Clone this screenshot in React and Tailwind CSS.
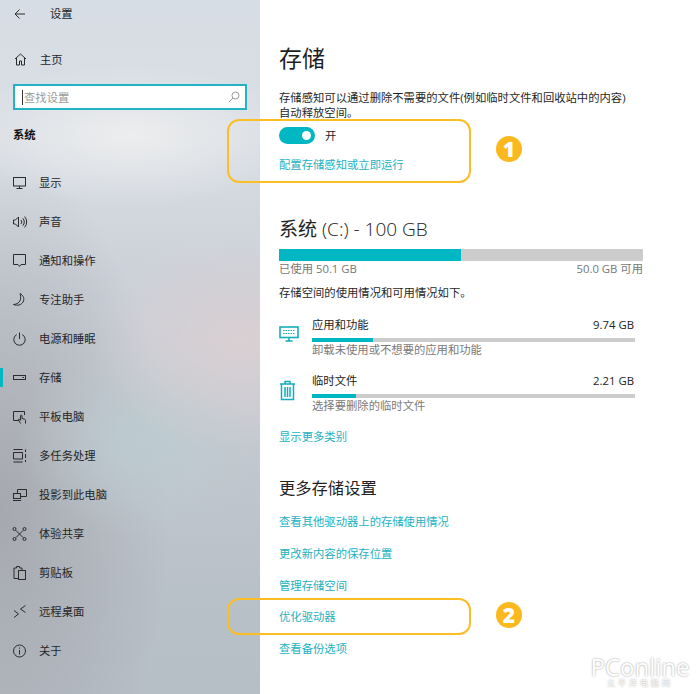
const cjk = "font-['Open_Sans','Noto_Sans_CJK_SC',sans-serif]";

function Glyph({ children }) {
  return (
    <svg width="16" height="16" viewBox="0 0 16 16" fill="none" stroke="#2b2b2b" strokeWidth="1" className="shrink-0">
      {children}
    </svg>
  );
}

const navItems = [
  { label: "显示", icon: <><rect x="1.500" y="2.500" width="12" height="8.500" /><path d="M7.500 11v2.500M4.500 13.500h6" /></> },
  { label: "声音", icon: <><path d="M1.500 6v4h2l3 3V3l-3 3z" /><path d="M9 6a3 3 0 0 1 0 4M10.800 4.300a5.400 5.400 0 0 1 0 7.400M12.600 2.600a8 8 0 0 1 0 10.800" /></> },
  { label: "通知和操作", icon: <path d="M1.500 1.500h12v10H9l-1.500 2-1.500-2H1.500z" /> },
  { label: "专注助手", icon: <path d="M8 1.500c3.600 2 4.800 5.600 3 8.600-1.700 2.800-5.600 4-9.500 2.400 3.300-.2 6-1.700 6.800-4.500.6-2.300.4-4.600-.3-6.500z" /> },
  { label: "电源和睡眠", icon: <><path d="M7.500 1.500v6.500" /><path d="M4.700 3.600a5.700 5.700 0 1 0 5.600 0" /></> },
  { label: "存储", active: true, icon: <><rect x="1.500" y="5.500" width="12" height="4" /><path d="M10.500 7.500h1.500" /></> },
  { label: "平板电脑", icon: <><path d="M7 11.500H1.500v-9h11V6" /><path d="M8.500 14.500 6.500 11c-.4-.8.500-1.300 1-.7l1 1V6.800c0-1 1.500-1 1.500 0v2.700l2.500.7c.7.2 1 .7 1 1.300v3" /></> },
  { label: "多任务处理", icon: <><path d="M1.500 1.500h9M1.500 14h9M1.500 4.500h9v6.500h-9zM13.500 1.500v2.500M13.500 6v4M13.500 12v2" /></> },
  { label: "投影到此电脑", icon: <><path d="M5.500 6.500v-4h9v7h-6" /><rect x="1.500" y="6.500" width="7" height="5" /><path d="M1 13.500h8" /></> },
  { label: "体验共享", icon: <><circle cx="2.500" cy="3" r="1.500" /><circle cx="12.500" cy="3" r="1.500" /><circle cx="2.500" cy="13" r="1.500" /><circle cx="12.500" cy="13" r="1.500" /><path d="m4 4.500 7 7M11 4.500l-7 7" /></> },
  { label: "剪贴板", icon: <><path d="M6 13.500H2V3h2.500V1.500h3V3H10v2" /><rect x="6.500" y="5.500" width="7" height="9" /></> },
  { label: "远程桌面", icon: <path d="m2 6.500 4.500 3.500L2 13.500M13.500 1.500 8.500 5l5 3.500" /> },
  { label: "关于", icon: <><circle cx="7.500" cy="8" r="6" /><path d="M7.500 7v4.500M7.500 4.500v1.200" /></> },
];

function Sidebar() {
  return (
    <aside className="w-[260px] h-full shrink-0 flex flex-col text-[11.33px] leading-[15px] text-[#262626] bg-[radial-gradient(ellipse_170px_70px_at_130px_135px,#ecedee,transparent),radial-gradient(ellipse_150px_110px_at_240px_340px,#d9d0d3,transparent),radial-gradient(ellipse_120px_100px_at_140px_440px,#bccbd0,transparent),radial-gradient(ellipse_170px_350px_at_0px_510px,#a6a8af,transparent),linear-gradient(180deg,#d7dde4_0%,#d9dee4_20%,#ccd1d9_40%,#c5cad1_60%,#b8c0c8_85%,#b6bec6_100%)]">
      <div className="flex items-center h-[15px] mt-[6px] pl-[14px]">
        <svg width="12" height="12" viewBox="0 0 12 12" fill="none" stroke="#2b2b2b" strokeWidth="1" className="shrink-0">
          <path d="M11 6H1M5.500 1.500 1 6l4.500 4.500" />
        </svg>
        <span className="ml-[24px]">设置</span>
      </div>

      <div className="flex items-center mt-[31px] pl-[14px]">
        <svg width="13" height="13" viewBox="0 0 13 13" fill="none" stroke="#2b2b2b" strokeWidth="1" className="shrink-0">
          <path d="M1 6 6.500 1 12 6M2.500 5v7h3V8h2v4h3V5" />
        </svg>
        <span className="ml-[13px]">主页</span>
      </div>

      <div className="mx-[13px] mt-[17px] h-[26px] border-2 border-[#22b4c4] bg-white flex items-center justify-between pl-[7px] pr-[5px]">
        <span className="border-l border-[#333] pl-px text-[#9a9a9a]">查找设置</span>
        <svg width="12" height="12" viewBox="0 0 12 12" fill="none" stroke="#9a9a9a" strokeWidth="1">
          <circle cx="7.500" cy="4.500" r="3.500" />
          <path d="M5 7 1 11" />
        </svg>
      </div>

      <div className="mt-[17px] pl-[13px] font-bold text-[#111]">系统</div>

      <nav className="mt-[21px] flex flex-col">
        {navItems.map((item) => (
          <div key={item.label} className="h-[39px] flex items-center pl-[12px] relative">
            {item.active && <span className="absolute left-0 top-[10px] w-[3px] h-[19px] bg-[#00b7c3]" />}
            <Glyph>{item.icon}</Glyph>
            <span className="ml-[11px]">{item.label}</span>
          </div>
        ))}
      </nav>
    </aside>
  );
}

function StorageRow({ icon, title, size, percent, hint, className }) {
  return (
    <div className={`flex w-[356px] ${className}`}>
      <div className="w-[33px] flex items-center pb-[6px]">{icon}</div>
      <div className="flex-1">
        <div className="flex justify-between pr-px text-[#222]">
          <span>{title}</span>
          <span>{size}</span>
        </div>
        <div className="mt-[6px] h-[4px] bg-[#cccccc]">
          <div className="h-full bg-[#00b7c3]" style={{ width: `${percent}%` }} />
        </div>
        <div className="text-[#7a7a7a]">{hint}</div>
      </div>
    </div>
  );
}

const linkColor = "text-[#22b2c2]";
const moreLinks = ["查看其他驱动器上的存储使用情况", "更改新内容的保存位置", "管理存储空间", "优化驱动器", "查看备份选项"];

export default function App() {
  return (
    <div className={`relative w-[700px] h-[694px] overflow-hidden flex bg-white ${cjk}`}>
      <Sidebar />
      <main className="flex-1 pl-[19px] text-[11.33px] leading-[15px] text-[#1f1f1f]">
        <h1 className="mt-[43px] text-[23px] leading-[30px] font-normal">存储</h1>
        <p className="mt-[17px] whitespace-nowrap">
          存储感知可以通过删除不需要的文件(例如临时文件和回收站中的内容)
          <br />
          自动释放空间。
        </p>
        <div className="mt-[7px] flex items-center">
          <div className="w-[36px] h-[17px] rounded-full bg-[#00b7c3] flex items-center justify-end pr-[4px]">
            <span className="w-[9px] h-[9px] rounded-full bg-white" />
          </div>
          <span className="ml-[10px]">开</span>
        </div>
        <a className={`block mt-[13px] ${linkColor}`}>配置存储感知或立即运行</a>

        <h2 className="mt-[44px] text-[19px] leading-[26px] font-light text-[#222] whitespace-nowrap">
          <span className="font-normal">系统</span> (C:) - 100 GB
        </h2>
        <div className="mt-[7px] w-[364px] h-[12px] bg-[#cccccc]">
          <div className="w-[182px] h-full bg-[#00b7c3]" />
        </div>
        <div className="w-[364px] flex justify-between text-[#777]">
          <span>已使用 50.1 GB</span>
          <span>50.0 GB 可用</span>
        </div>
        <p className="mt-[9px]">存储空间的使用情况和可用情况如下。</p>

        <StorageRow
          className="mt-[17px]"
          title="应用和功能"
          size="9.74 GB"
          percent={19}
          hint="卸载未使用或不想要的应用和功能"
          icon={
            <svg width="20" height="16" viewBox="0 0 20 16" fill="none" stroke="#14adbc" strokeWidth="1.600">
              <rect x="1" y="1" width="18" height="10.500" />
              <path d="M4 4.500h12M4 7.500h12" strokeDasharray="1.500 1" strokeWidth="1.200" />
              <path d="M10 11.500v3M6.500 15h7" />
            </svg>
          }
        />
        <StorageRow
          className="mt-[16px]"
          title="临时文件"
          size="2.21 GB"
          percent={13.500}
          hint="选择要删除的临时文件"
          icon={
            <svg width="17" height="21" viewBox="0 0 17 21" fill="none" stroke="#14adbc" strokeWidth="1.500">
              <path d="M1 4h15M6 4V1.500h5V4M2.500 4v15.500h12V4M6 7v10M8.500 7v10M11 7v10" />
            </svg>
          }
        />
        <a className={`block mt-[16px] ${linkColor}`}>显示更多类别</a>

        <h2 className="mt-[32px] text-[16.3px] leading-[24px] font-normal text-[#222]">更多存储设置</h2>
        <div className="mt-[14px] flex flex-col gap-[16.75px]">
          {moreLinks.map((link) => (
            <a key={link} className={linkColor}>{link}</a>
          ))}
        </div>
      </main>

      {/* callouts drawn over the screenshot */}
      <div className="absolute left-[227px] top-[119px] w-[244px] h-[64px] rounded-[12px] border-2 border-[#fdbd25]" />
      <div className="absolute left-[227px] top-[598px] w-[244px] h-[37px] rounded-[12px] border-2 border-[#fdbd25]" />
      <div className="absolute left-[496px] top-[136px] w-[26px] h-[26px] rounded-full bg-[#fbb81f] flex items-center justify-center text-white font-extrabold text-[21px] leading-none">1</div>
      <div className="absolute left-[496px] top-[602px] w-[26px] h-[26px] rounded-full bg-[#fbb81f] flex items-center justify-center text-white font-extrabold text-[21px] leading-none">2</div>

      <div className="absolute left-[590px] top-[655px] w-[100px] flex flex-col items-center text-white [text-shadow:0_0_2px_#8f8f8f]">
        <div className="text-[24px] leading-[24px] whitespace-nowrap">PConline</div>
        <div className="text-[8px] leading-[8px] tracking-[3px] whitespace-nowrap">太平洋电脑网</div>
      </div>
    </div>
  );
}
